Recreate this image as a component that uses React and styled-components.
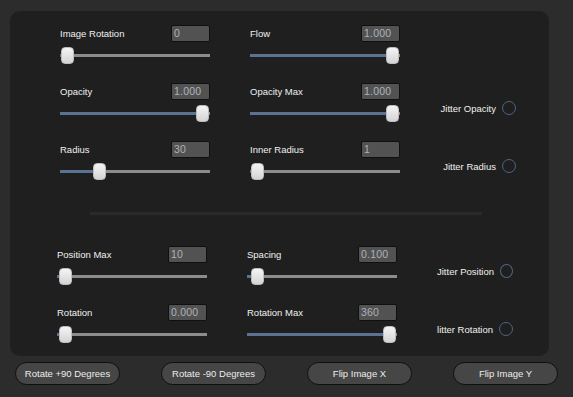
import React from "react";
import styled, { createGlobalStyle } from "styled-components";

const Global = createGlobalStyle`
  html, body { margin: 0; padding: 0; background: #2c2c2c; }
  body { font-family: "Liberation Sans", Arial, sans-serif; }
`;

const Page = styled.div`
  width: 573px;
  height: 397px;
  box-sizing: border-box;
  background: #2c2c2c;
  padding-top: 11px;
  display: flex;
  flex-direction: column;
  overflow: hidden;
`;

const Panel = styled.div`
  margin-left: 10px;
  width: 539px;
  height: 345px;
  box-sizing: border-box;
  background: #1f1f1f;
  border-radius: 10px;
  padding-top: 14px;
  display: flex;
  flex-direction: column;
`;

const Section = styled.div`
  display: grid;
  grid-template-columns: 150px 150px 76px;
  column-gap: 40px;
  row-gap: 19px;
  padding-left: ${(p) => p.$indent}px;
`;

const Separator = styled.div`
  margin: 32px 0 31px 80px;
  width: 392px;
  height: 3px;
  background: #2a2a2a;
`;

const Group = styled.div`
  display: flex;
  flex-direction: column;
  height: 39px;
`;

const Header = styled.div`
  display: flex;
  align-items: center;
  justify-content: space-between;
  height: 17px;
`;

const Label = styled.span`
  font-size: 9.5px;
  color: #f0f0f0;
  white-space: nowrap;
`;

const ValueBox = styled.div`
  width: 39px;
  height: 17px;
  box-sizing: border-box;
  background: #525252;
  border: 1px solid #101010;
  border-radius: 2px;
  padding-left: 2px;
  font-size: 10.5px;
  line-height: 15px;
  color: #acb2ba;
  letter-spacing: 0.2px;
`;

const SliderBox = styled.div`
  margin-top: 5px;
  height: 17px;
  display: flex;
  align-items: center;
`;

const Track = styled.div`
  position: relative;
  width: 100%;
  height: 3px;
  background: #8c8c8c;
`;

const Fill = styled.div`
  position: absolute;
  left: 0;
  top: 0;
  height: 100%;
  background: #5b7393;
`;

const Thumb = styled.div`
  position: absolute;
  top: -7px;
  width: 13px;
  height: 17px;
  box-sizing: border-box;
  border-radius: 4px;
  background: linear-gradient(#f4f4f4, #d4d4d4);
  border: 1px solid #bdbdbd;
`;

const JitterCell = styled.div`
  height: 39px;
  box-sizing: border-box;
  padding-top: 11px;
  display: flex;
  align-items: center;
  justify-content: flex-end;
  gap: 6px;
`;

const Circle = styled.div`
  width: 14px;
  height: 14px;
  box-sizing: border-box;
  border-radius: 50%;
  border: 1.5px solid #4f6583;
`;

const ButtonRow = styled.div`
  display: flex;
  gap: 41px;
  padding-left: 15px;
  margin-top: 6px;
`;

const Button = styled.button`
  width: 105px;
  height: 23px;
  box-sizing: border-box;
  background: #464646;
  border: 1px solid #0f0f0f;
  border-radius: 12px;
  color: #ececec;
  font-family: "Liberation Sans", Arial, sans-serif;
  font-size: 9.5px;
  padding: 0;
  flex: none;
`;

function Slider({ label, value, ratio }) {
  const left = 1 + ratio * 135;
  return (
    <Group>
      <Header>
        <Label>{label}</Label>
        <ValueBox>{value}</ValueBox>
      </Header>
      <SliderBox>
        <Track>
          <Fill style={{ width: `${left + 6}px` }} />
          <Thumb style={{ left: `${left}px` }} />
        </Track>
      </SliderBox>
    </Group>
  );
}

function Jitter({ label }) {
  return (
    <JitterCell>
      <Label>{label}</Label>
      <Circle />
    </JitterCell>
  );
}

export default function App() {
  return (
    <>
      <Global />
      <Page>
        <Panel>
          <Section $indent={50}>
            <Slider label="Image Rotation" value="0" ratio={0} />
            <Slider label="Flow" value="1.000" ratio={1} />
            <div />
            <Slider label="Opacity" value="1.000" ratio={1} />
            <Slider label="Opacity Max" value="1.000" ratio={1} />
            <Jitter label="Jitter Opacity" />
            <Slider label="Radius" value="30" ratio={32 / 135} />
            <Slider label="Inner Radius" value="1" ratio={0} />
            <Jitter label="Jitter Radius" />
          </Section>
          <Separator />
          <Section $indent={47}>
            <Slider label="Position Max" value="10" ratio={0.01} />
            <Slider label="Spacing" value="0.100" ratio={0.022} />
            <Jitter label="Jitter Position" />
            <Slider label="Rotation" value="0.000" ratio={0.005} />
            <Slider label="Rotation Max" value="360" ratio={1} />
            <Jitter label="litter Rotation" />
          </Section>
        </Panel>
        <ButtonRow>
          <Button>Rotate +90 Degrees</Button>
          <Button>Rotate -90 Degrees</Button>
          <Button>Flip Image X</Button>
          <Button>Flip Image Y</Button>
        </ButtonRow>
      </Page>
    </>
  );
}
